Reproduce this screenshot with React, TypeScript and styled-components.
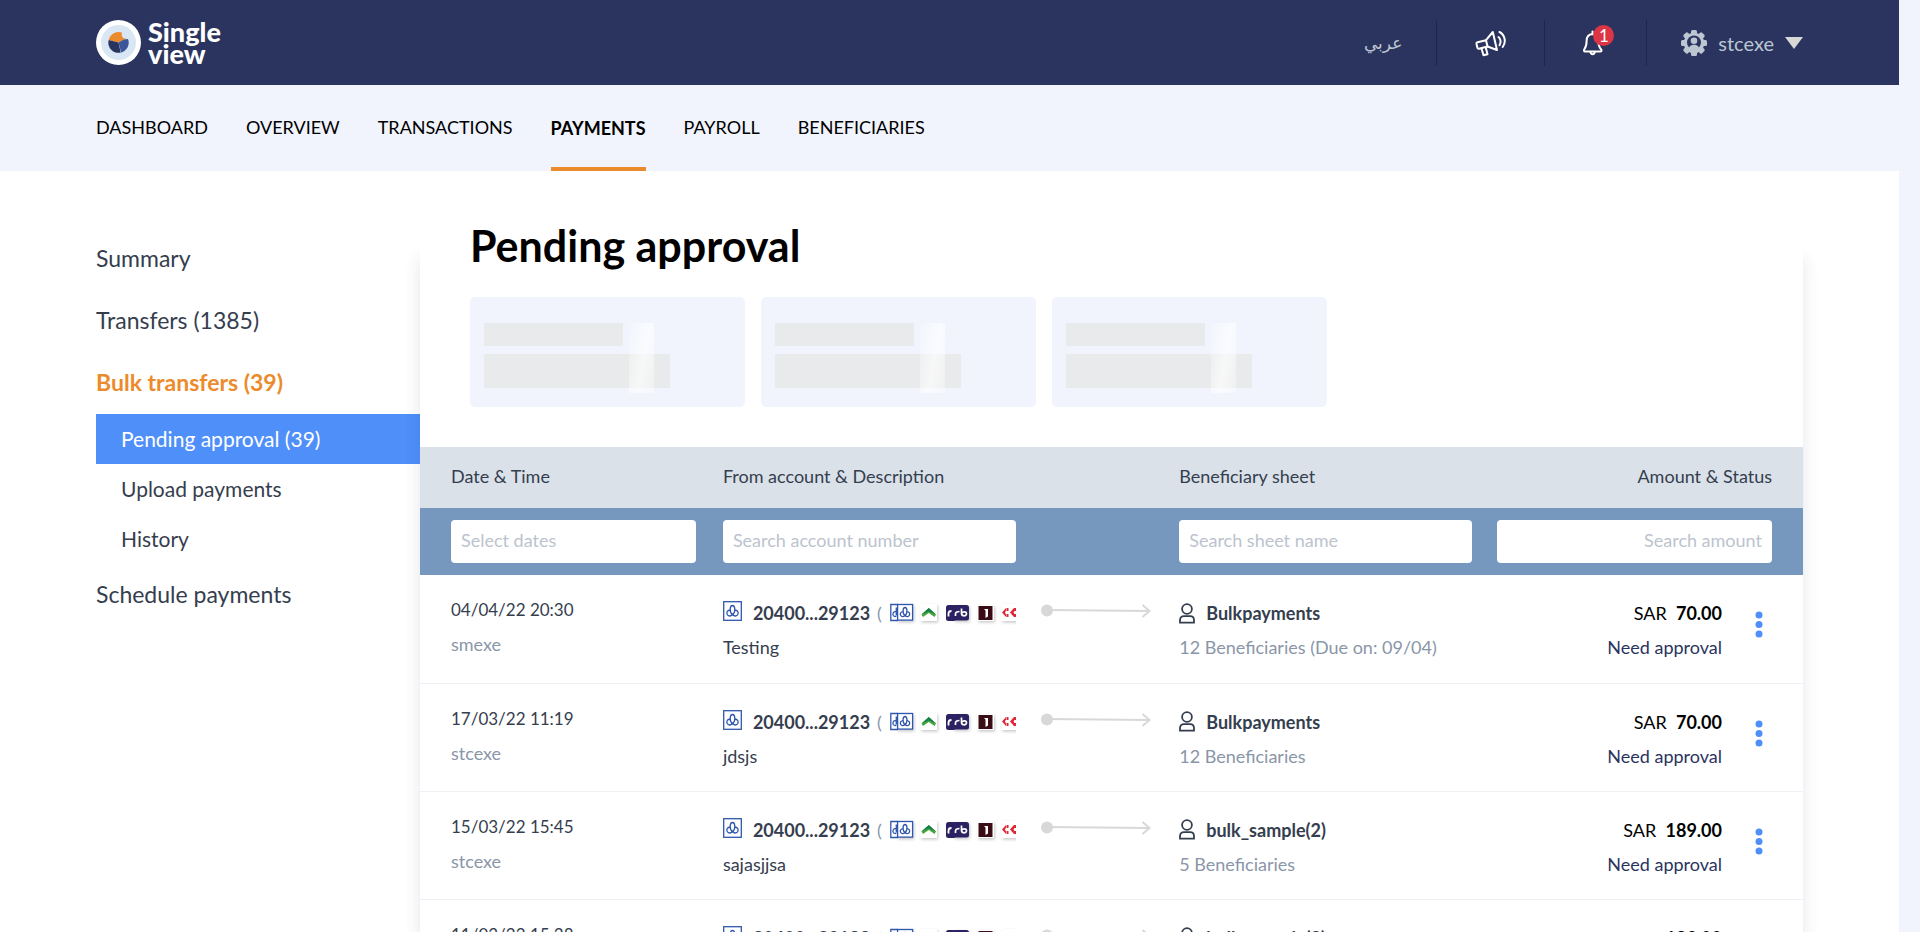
import React from "react";
import styled, { createGlobalStyle, css } from "styled-components";

const GlobalStyle = createGlobalStyle`
  *, *::before, *::after { box-sizing: border-box; }
  body {
    margin: 0;
    background: #f1f4fd;
    color: #353e4e;
    font-family: Lato, "Open Sans", sans-serif;
    font-size: 18px;
    line-height: 24px;
  }
  button, input { font: inherit; color: inherit; }
  a { color: inherit; text-decoration: none; }
  svg { display: block; flex: none; }
`;

const Shell = styled.div`
  height: 100vh;
  overflow-y: auto;
  scrollbar-width: none;
`;

const Header = styled.header`
  display: flex;
  align-items: center;
  justify-content: space-between;
  height: 85px;
  margin-right: 21px;
  padding: 0 96px;
  background: #2b345e;
`;

const Brand = styled.a`
  display: flex;
  align-items: center;
  gap: 7px;
  color: #fff;
`;

const BrandName = styled.span`
  display: flex;
  flex-direction: column;
  font-size: 27px;
  font-weight: 900;
  line-height: 22px;
`;

const Tools = styled.div`
  display: flex;
  align-items: center;
  color: #bcc6d2;
`;

const tool = css`
  display: flex;
  align-items: center;
  justify-content: center;
  height: 46px;
  padding: 0;
  border: 0;
  background: none;
  cursor: pointer;
`;

const Language = styled.button`
  ${tool}
  padding-right: 34px;
  font-family: "DejaVu Sans", sans-serif;
  font-size: 17px;
`;

const IconTool = styled.button<{ $end?: number }>`
  ${tool}
  position: relative;
  padding: 0 ${(p) => p.$end ?? 38}px 0 38px;
  border-left: 1px solid #1d264c;
  color: #fff;
`;

const Badge = styled.span`
  position: absolute;
  top: 5px;
  left: 48px;
  width: 21px;
  height: 21px;
  border-radius: 50%;
  background: #dc3545;
  color: #fff;
  font-size: 17px;
  line-height: 21px;
  text-align: center;
`;

const UserMenu = styled.button`
  ${tool}
  gap: 11px;
  padding-left: 34px;
  border-left: 1px solid #1d264c;
  font-size: 20px;
`;

const Nav = styled.nav`
  display: flex;
  gap: 38px;
  height: 86px;
  padding: 0 96px;
  background: #f1f4fd;
`;

const NavLink = styled.a<{ $active?: boolean }>`
  display: flex;
  align-items: center;
  padding-bottom: ${(p) => (p.$active ? 0 : 2)}px;
  border-top: 3px solid transparent;
  border-bottom: 4px solid ${(p) => (p.$active ? "#ec8b2c" : "transparent")};
  color: #000;
  font-weight: ${(p) => (p.$active ? 700 : 400)};
`;

const Page = styled.main`
  display: flex;
  align-items: flex-start;
  min-height: calc(100vh - 171px);
  margin-right: 21px;
  padding: 0 96px;
  background: #fff;
`;

const Sidebar = styled.aside`
  flex: 0 0 324px;
  display: flex;
  flex-direction: column;
  padding-top: 57px;
`;

const SideLink = styled.a<{ $active?: boolean }>`
  padding: 15px 0 17px;
  font-size: 23px;
  line-height: 30px;
  ${(p) => p.$active && css`
    color: #ec8b2c;
    font-weight: 700;
  `}
`;

const SubLinks = styled.div`
  display: flex;
  flex-direction: column;
`;

const SubLink = styled.a<{ $active?: boolean }>`
  padding: 0 25px;
  font-size: 21px;
  line-height: 50px;
  ${(p) => p.$active && css`
    background: #4f8ff9;
    color: #fff;
  `}
`;

const Panel = styled.section`
  position: relative;
  flex: 1;
  min-width: 0;
  margin-top: 72px;
  box-shadow: 0 16px 16px rgba(43, 52, 94, 0.12);
`;

const PanelTop = styled.div`
  margin-top: -23px;
  padding: 0 50px 40px;
`;

const Title = styled.h1`
  margin: 0;
  padding-bottom: 25px;
  color: #000;
  font-size: 43px;
  font-weight: 700;
  line-height: 52px;
`;

const Cards = styled.div`
  display: flex;
  gap: 16px;
`;

const Card = styled.div`
  position: relative;
  display: flex;
  flex-direction: column;
  gap: 8px;
  width: 275px;
  height: 110px;
  padding: 26px 14px 0;
  border-radius: 5px;
  background: #f1f4fd;
`;

const Bone = styled.span<{ $tall?: boolean }>`
  width: ${(p) => (p.$tall ? 186 : 139)}px;
  height: ${(p) => (p.$tall ? 34 : 23)}px;
  background: #e9eaeb;
`;

const Shimmer = styled.span`
  position: absolute;
  top: 26px;
  left: 159px;
  width: 25px;
  height: 70px;
  background: linear-gradient(100deg, rgba(255, 255, 255, 0.1), rgba(255, 255, 255, 0.65) 55%, rgba(255, 255, 255, 0.3));
`;

const Table = styled.table`
  width: 100%;
  border-collapse: collapse;
  table-layout: fixed;
  background: #fff;
`;

const Th = styled.th<{ $right?: boolean }>`
  height: 61px;
  padding: 0 31px 4px 0;
  background: #dae1e9;
  font-weight: 400;
  text-align: ${(p) => (p.$right ? "right" : "left")};
  &:first-child { padding-left: 31px; }
`;

const FilterCell = styled.td<{ $last?: boolean }>`
  height: 67px;
  padding: 0 ${(p) => (p.$last ? 31 : 25)}px 0 0;
  background: #7698bf;
  &:first-child { padding-left: 31px; padding-right: 27px; }
`;

const Field = styled.input<{ $right?: boolean }>`
  display: block;
  width: 100%;
  height: 43px;
  padding: 0 10px 3px;
  border: 0;
  border-radius: 4px;
  background: #fff;
  text-align: ${(p) => (p.$right ? "right" : "left")};
  &::placeholder { color: #bcc3ce; opacity: 1; }
`;

const Row = styled.tr`
  border-bottom: 1px solid #eff1f5;
`;

const Td = styled.td`
  height: 108px;
  padding: 26px 25px 0 0;
  vertical-align: top;
  white-space: nowrap;
  &:first-child { padding-left: 31px; padding-top: 23px; }
`;

const Stack = styled.div`
  display: flex;
  flex-direction: column;
  gap: 10px;
`;

const Line = styled.div<{ $muted?: boolean }>`
  color: ${(p) => (p.$muted ? "#8a96a8" : "inherit")};
`;

const DateLine = styled(Line)`
  font-size: 17px;
`;

const Account = styled.div`
  display: flex;
  align-items: flex-start;
  height: 24px;
  overflow: hidden;
  color: #8a96a8;
`;

const AccountNumber = styled.strong`
  margin: 0 7px 0 11px;
  color: #353e4e;
`;

const Banks = styled.span`
  margin-left: 8px;
`;

const Sheet = styled.strong`
  display: flex;
  align-items: center;
  gap: 10px;
`;

const AmountCell = styled.div`
  display: flex;
  align-items: flex-start;
  justify-content: flex-end;
  gap: 33px;
  margin-right: 15px;
`;

const Amounts = styled(Stack)`
  align-items: flex-end;
`;

const Amount = styled.div`
  color: #000;
`;

const Status = styled.div`
  color: #2b345e;
`;

const More = styled.button`
  padding: 10px 0;
  border: 0;
  background: none;
  cursor: pointer;
`;

function Logo() {
  return (
    <svg width="45" height="45" viewBox="0 0 45 45">
      <circle cx="22.500" cy="22.500" r="22.500" fill="#fff" />
      <circle cx="22.500" cy="22.500" r="17.500" fill="#d9e6f3" />
      <path d="M22.500 22.500 12.800 20A10.200 10.200 0 0 1 26 12.600l-.4 3 1.800 2.600 3 .4Z" fill="#ec8b2c" />
      <path d="M22.500 22.500 12.700 20a10.200 10.200 0 0 0 12 12.600Z" fill="#2b345e" />
      <path d="m22.500 22.500 2.600 10A10.200 10.200 0 0 0 32 18.900l-4 .6Z" fill="#3b5798" />
    </svg>
  );
}

function Megaphone() {
  return (
    <svg width="31" height="28" viewBox="0 0 31 28" fill="none" stroke="currentColor" strokeWidth="2" strokeLinejoin="round" strokeLinecap="round">
      <path d="M1.500 15Q1.200 13.600 2.500 13.200L11 11.200 17.800 3l4.200 18-9.500-3.500-8.500 2.200q-1.300.2-1.600-1Z" />
      <path d="m11 11.200 1.500 6.300" />
      <path d="m6.500 19.500 2 6.800 4-1-1.800-7" />
      <path d="M23.500 8c2.300 1.800 2.800 5.500 1 8.200" />
      <path d="M24.500 3c5.300 2.700 7 9.800 3.200 15" />
    </svg>
  );
}

function Bell() {
  return (
    <svg width="22" height="26" viewBox="0 0 22 26" fill="none" stroke="currentColor" strokeWidth="2" strokeLinejoin="round" strokeLinecap="round">
      <path d="M9.500 1.500V4C5.300 4.300 3.600 7.300 3.600 11c0 4.500-.8 6.400-2.200 8.200-.8 1.300-.4 2.300.8 2.300h15c1.200 0 1.800-1 .8-2.300C16.200 17.400 15.400 15.500 15.400 11c0-3.700-1.700-6.700-5.900-7" />
      <path d="M7.500 22c.3 3 3.900 3 4.200 0" />
    </svg>
  );
}

function Gear() {
  return (
    <svg width="26" height="28" viewBox="0 0 26 28">
      <g fill="currentColor">
        {[0, 45, 90, 135].map((a) => (
          <rect key={a} x="10" y="1" width="6" height="26" rx="1.500" transform={`rotate(${a} 13 14)`} />
        ))}
        <circle cx="13" cy="14" r="10.300" />
      </g>
      <circle cx="13" cy="13.500" r="7" fill="#2b345e" />
      <circle cx="13" cy="11.800" r="3.300" fill="currentColor" />
      <path d="M7.500 21c0-7 11-7 11 0Z" fill="currentColor" />
    </svg>
  );
}

function Trefoil() {
  return (
    <svg width="19" height="20" viewBox="0 0 19 20" fill="none" stroke="#2f57ae" strokeWidth="1.300">
      <rect x=".7" y=".7" width="17.600" height="18.600" fill="#fff" />
      <path d="M9.500 14C6 11 6.800 4.500 9.500 4.500s3.500 6.500 0 9.500" />
      <path d="M7.300 9.300c-2.800-.3-4 2-3.200 4 1.200 2.700 5 2 5.400-.6M11.700 9.300c2.800-.3 4 2 3.200 4-1.200 2.700-5 2-5.400-.6" />
    </svg>
  );
}

function BankStrip() {
  return (
    <svg width="136" height="24" viewBox="0 0 136 24">
      <defs>
        <filter id="bank-shadow" x="-30%" y="-30%" width="180%" height="180%">
          <feDropShadow dx="1" dy="1.500" stdDeviation="1.500" floodOpacity=".22" />
        </filter>
      </defs>
      <g transform="translate(0 1)">
        <g fill="none" stroke="#2f57ae" strokeWidth="1.300">
          <path d="M8 2.500H.8v16H8" />
          <path d="M6.300 5.500v8M6.300 9.700c-3-.5-4 2-3 3.800.6 1 2 1.300 3 .7" />
        </g>
        <g filter="url(#bank-shadow)" fill="#fff" stroke="#2f57ae" strokeWidth="1.300">
          <rect x="7.600" y="2.500" width="15" height="15.600" />
          <path fill="none" d="M15 14c-3-3-2.200-8.500 0-8.500s3 5.500 0 8.500" />
          <path fill="none" d="M13.200 9.700c-2.500 0-3.400 2-2.600 3.600 1 2 4 1.500 4.400-.7M16.800 9.700c2.500 0 3.400 2 2.600 3.600-1 2-4 1.500-4.400-.7" />
        </g>
        <rect x="30.500" y="2" width="16.500" height="17" fill="#fff" filter="url(#bank-shadow)" />
        <path d="m31.500 12.500 7.300-6.500 7.200 6.500-1.500 2.500-5.700-4-5.800 4Z" fill="#4ba63f" />
        <path d="m31.500 12.500 7.300-6.500 7.200 6.500-7.200-3Z" fill="#15804a" />
        <rect x="56" y="3" width="10" height="16" rx="2.500" fill="#2c2163" />
        <path d="M58.500 14.500V11.500c0-2 1-2.500 3-2.500" fill="none" stroke="#fff" strokeWidth="1.800" />
        <rect x="63" y="3" width="16" height="15.500" rx="2.500" fill="#2c2163" filter="url(#bank-shadow)" />
        <path d="M65.500 14v-2c0-2 1-2.500 4-2.500M71.500 6.500v5c0 3 5 3 5 .2s-4-2.200-5-.2" fill="none" stroke="#fff" strokeWidth="1.700" />
        <rect x="87.500" y="3" width="16.500" height="16" fill="#fff" filter="url(#bank-shadow)" />
        <rect x="88.500" y="4" width="14" height="14" fill="#3a0c15" />
        <path d="M94 7h4v7.500l-2.500 1.500V8.500Z" fill="#fff" />
        <rect x="111.500" y="2" width="20" height="17" fill="#fff" filter="url(#bank-shadow)" />
        <g fill="#e02634">
          <path d="M112 10.500 116 6v2.500l-1 2 1 2V15Z" />
          <path d="M116.500 6h2v3h-2ZM116.500 12h2v3h-2Z" />
          <path d="M120 10.500 124 6h3v3h-2.500l-1 1.500 1 1.500h2.500v3h-3Z" />
        </g>
      </g>
    </svg>
  );
}

function FlowArrow() {
  return (
    <svg width="110" height="24" viewBox="0 0 110 24" fill="none" stroke="#d8d8d8" strokeWidth="2">
      <circle cx="6" cy="9.500" r="6" fill="#d8d8d8" stroke="none" />
      <path d="m6 9 102 1" />
      <path d="m101.500 4 7 6-7 6" />
    </svg>
  );
}

function Person() {
  return (
    <svg width="17" height="21" viewBox="0 0 17 21" fill="none" stroke="#353e4e" strokeWidth="1.800">
      <circle cx="8" cy="6" r="4.900" />
      <path d="M1 19.700V17c0-2.400 1.600-3.800 4-3.800h6c2.400 0 4 1.400 4 3.800v2.700Z" />
    </svg>
  );
}

const rows = [
  { date: "04/04/22 20:30", by: "smexe", note: "Testing", sheet: "Bulkpayments", detail: "12 Beneficiaries (Due on: 09/04)", amount: "70.00" },
  { date: "17/03/22 11:19", by: "stcexe", note: "jdsjs", sheet: "Bulkpayments", detail: "12 Beneficiaries", amount: "70.00" },
  { date: "15/03/22 15:45", by: "stcexe", note: "sajasjjsa", sheet: "bulk_sample(2)", detail: "5 Beneficiaries", amount: "189.00" },
  { date: "11/03/22 15:28", by: "stcexe", note: "Testing", sheet: "bulk_sample(2)", detail: "5 Beneficiaries", amount: "189.00" },
];

const navItems = ["DASHBOARD", "OVERVIEW", "TRANSACTIONS", "PAYMENTS", "PAYROLL", "BENEFICIARIES"];

export default function App() {
  return (
    <Shell>
      <GlobalStyle />
      <Header>
        <Brand href="#">
          <Logo />
          <BrandName><span>Single</span><span>view</span></BrandName>
        </Brand>
        <Tools>
          <Language type="button" lang="ar">عربي</Language>
          <IconTool type="button" aria-label="Announcements"><Megaphone /></IconTool>
          <IconTool type="button" aria-label="Notifications" $end={41}><Bell /><Badge>1</Badge></IconTool>
          <UserMenu type="button">
            <Gear />
            stcexe
            <svg width="18" height="12" viewBox="0 0 18 12"><path d="M0 0h18L9 12Z" fill="#d8d8d8" /></svg>
          </UserMenu>
        </Tools>
      </Header>
      <Nav>
        {navItems.map((item) => (
          <NavLink key={item} href="#" $active={item === "PAYMENTS"}>{item}</NavLink>
        ))}
      </Nav>
      <Page>
        <Sidebar>
          <SideLink href="#">Summary</SideLink>
          <SideLink href="#">Transfers (1385)</SideLink>
          <SideLink href="#" $active>Bulk transfers (39)</SideLink>
          <SubLinks>
            <SubLink href="#" $active>Pending approval (39)</SubLink>
            <SubLink href="#">Upload payments</SubLink>
            <SubLink href="#">History</SubLink>
          </SubLinks>
          <SideLink href="#">Schedule payments</SideLink>
        </Sidebar>
        <Panel>
          <PanelTop>
            <Title>Pending approval</Title>
            <Cards>
              {[0, 1, 2].map((i) => (
                <Card key={i}><Bone /><Bone $tall /><Shimmer /></Card>
              ))}
            </Cards>
          </PanelTop>
          <Table>
            <colgroup>
              <col style={{ width: "21.9%" }} />
              <col style={{ width: "23%" }} />
              <col style={{ width: "10%" }} />
              <col style={{ width: "23%" }} />
              <col style={{ width: "22.1%" }} />
            </colgroup>
            <thead>
              <tr>
                <Th>Date &amp; Time</Th>
                <Th colSpan={2}>From account &amp; Description</Th>
                <Th>Beneficiary sheet</Th>
                <Th $right>Amount &amp; Status</Th>
              </tr>
            </thead>
            <tbody>
              <tr>
                <FilterCell><Field aria-label="Dates" placeholder="Select dates" /></FilterCell>
                <FilterCell><Field aria-label="Account number" placeholder="Search account number" /></FilterCell>
                <FilterCell />
                <FilterCell><Field aria-label="Sheet name" placeholder="Search sheet name" /></FilterCell>
                <FilterCell $last><Field aria-label="Amount" placeholder="Search amount" $right /></FilterCell>
              </tr>
              {rows.map((r) => (
                <Row key={r.date}>
                  <Td><Stack><DateLine>{r.date}</DateLine><Line $muted>{r.by}</Line></Stack></Td>
                  <Td>
                    <Stack>
                      <Account>
                        <Trefoil />
                        <AccountNumber>20400...29123</AccountNumber>(
                        <Banks><BankStrip /></Banks>
                      </Account>
                      <Line>{r.note}</Line>
                    </Stack>
                  </Td>
                  <Td><FlowArrow /></Td>
                  <Td>
                    <Stack>
                      <Sheet><Person />{r.sheet}</Sheet>
                      <Line $muted>{r.detail}</Line>
                    </Stack>
                  </Td>
                  <Td>
                    <AmountCell>
                      <Amounts>
                        <Amount>SAR&nbsp; <strong>{r.amount}</strong></Amount>
                        <Status>Need approval</Status>
                      </Amounts>
                      <More type="button" aria-label="More actions">
                        <svg width="8" height="28" viewBox="0 0 8 28" fill="#4f8ff9">
                          <circle cx="4" cy="4" r="3.500" /><circle cx="4" cy="13.500" r="3.500" /><circle cx="4" cy="23" r="3.500" />
                        </svg>
                      </More>
                    </AmountCell>
                  </Td>
                </Row>
              ))}
            </tbody>
          </Table>
        </Panel>
      </Page>
    </Shell>
  );
}
